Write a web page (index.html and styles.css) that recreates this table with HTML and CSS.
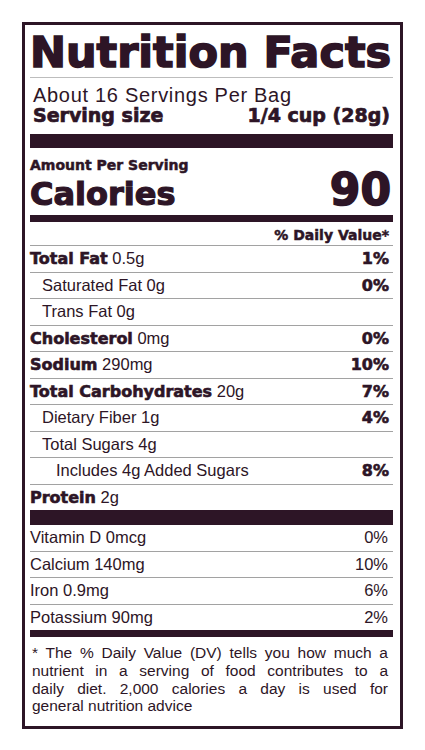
FILE: index.html
```html
<!DOCTYPE html>
<html lang="en">
<head>
<meta charset="utf-8">
<title>Nutrition Facts</title>
<link rel="stylesheet" href="styles.css">
</head>
<body>
<section class="label">
  <h1 class="title">Nutrition Facts</h1>
  <div class="per">About 16 Servings Per Bag</div>
  <div class="size"><span>Serving size</span><span>1/4 cup (28g)</span></div>
  <div class="bar bar-thick"></div>
  <div class="amount">Amount Per Serving</div>
  <div class="calories"><span class="cal-label">Calories</span><span class="cal-value">90</span></div>
  <div class="bar bar-med"></div>
  <div class="dv-head">% Daily Value*</div>

  <div class="row"><span><b>Total Fat</b> 0.5g</span><b>1%</b></div>
  <div class="row"><span class="ind1">Saturated Fat 0g</span><b>0%</b></div>
  <div class="row"><span class="ind1">Trans Fat 0g</span></div>
  <div class="row"><span><b>Cholesterol</b> 0mg</span><b>0%</b></div>
  <div class="row"><span><b>Sodium</b> 290mg</span><b>10%</b></div>
  <div class="row"><span><b>Total Carbohydrates</b> 20g</span><b>7%</b></div>
  <div class="row"><span class="ind1">Dietary Fiber 1g</span><b>4%</b></div>
  <div class="row"><span class="ind1">Total Sugars 4g</span></div>
  <div class="row"><span class="ind2">Includes 4g Added Sugars</span><b>8%</b></div>
  <div class="row"><span><b>Protein</b> 2g</span></div>

  <div class="bar bar-thick2"></div>

  <div class="row vit first"><span>Vitamin D 0mcg</span><span>0%</span></div>
  <div class="row vit"><span>Calcium 140mg</span><span>10%</span></div>
  <div class="row vit"><span>Iron 0.9mg</span><span>6%</span></div>
  <div class="row vit"><span>Potassium 90mg</span><span>2%</span></div>

  <div class="bar bar-med"></div>

  <p class="foot">
    <span class="jl">* The % Daily Value (DV) tells you how much a</span>
    <span class="jl">nutrient in a serving of food contributes to a</span>
    <span class="jl">daily diet. 2,000 calories a day is used for</span>
    <span class="last">general nutrition advice</span>
  </p>
</section>
</body>
</html>
```

FILE: styles.css
```css
html, body {
  margin: 0;
  padding: 0;
  background: #ffffff;
}

body {
  color: #2d1526;
  font-family: "Liberation Sans", Arial, sans-serif;
}

.label {
  box-sizing: border-box;
  width: 381px;
  margin: 22px 0 0 22px;
  border: 3px solid #2d1526;
  padding: 4px 7px 11px 5px;
}

.title {
  margin: 0;
  font-family: "DejaVu Sans", sans-serif;
  font-weight: bold;
  font-size: 43px;
  line-height: 46px;
  padding-bottom: 2px;
  border-bottom: 1px solid #bdbdbd;
  white-space: nowrap;
  -webkit-text-stroke: 1.6px #2d1526;
}

.per {
  margin-top: 8px;
  padding-left: 3px;
  font-size: 20px;
  line-height: 19px;
  letter-spacing: 0.7px;
}

.size {
  display: flex;
  justify-content: space-between;
  padding: 0 3px;
  font-family: "DejaVu Sans", sans-serif;
  font-weight: bold;
  font-size: 19px;
  line-height: 20px;
  -webkit-text-stroke: 0.7px #2d1526;
}

.bar {
  background: #2d1526;
}

.bar-thick {
  margin-top: 9px;
  height: 14px;
}

.bar-thick2 {
  height: 15px;
}

.bar-med {
  height: 7px;
}

.amount {
  margin-top: 10px;
  font-family: "DejaVu Sans", sans-serif;
  font-weight: bold;
  font-size: 14px;
  line-height: 14px;
  -webkit-text-stroke: 0.5px #2d1526;
}

.calories {
  display: flex;
  justify-content: space-between;
  align-items: baseline;
  padding-right: 2px;
  margin-bottom: 3px;
  font-family: "DejaVu Sans", sans-serif;
  font-weight: bold;
}

.cal-label {
  font-size: 32px;
  line-height: 36px;
  -webkit-text-stroke: 1.2px #2d1526;
}

.cal-value {
  font-size: 44px;
  line-height: 36px;
  -webkit-text-stroke: 1.6px #2d1526;
}

.dv-head {
  padding: 4px 4px 0 0;
  text-align: right;
  font-family: "DejaVu Sans", sans-serif;
  font-weight: bold;
  font-size: 14px;
  line-height: 19px;
  -webkit-text-stroke: 0.5px #2d1526;
}

.row {
  display: flex;
  justify-content: space-between;
  align-items: baseline;
  height: 25.5px;
  border-top: 1px solid #a2a2a2;
  padding-right: 4px;
  font-size: 16.5px;
  line-height: 25.5px;
  white-space: nowrap;
}

.row b {
  font-family: "DejaVu Sans", sans-serif;
  font-weight: bold;
  font-size: 16px;
  -webkit-text-stroke: 0.6px #2d1526;
}

.row.first {
  border-top: none;
}

.row.vit {
  padding-right: 5px;
}

.ind1 {
  padding-left: 12px;
}

.ind2 {
  padding-left: 26px;
}

.foot {
  margin: 7px 0 0 0;
  padding: 0 5px 0 2px;
  font-size: 15.5px;
  line-height: 17.8px;
}

.foot .jl {
  display: block;
  text-align: justify;
  text-align-last: justify;
}

.foot .last {
  display: block;
}
```
